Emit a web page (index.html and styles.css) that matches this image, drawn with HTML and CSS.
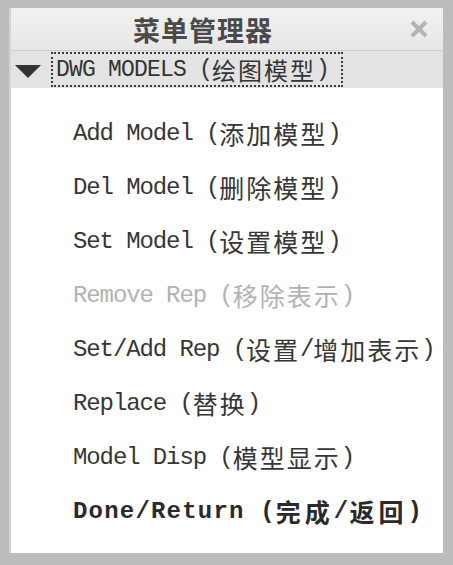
FILE: index.html
```html
<!DOCTYPE html>
<html lang="zh-CN">
<head>
    <meta charset="UTF-8">
    <meta name="viewport" content="width=device-width, initial-scale=1.0">
    <title>菜单管理器</title>
    <link rel="stylesheet" href="styles.css">
</head>
<body>
    <div class="window">
        <div class="titlebar">
            <div class="title">菜单管理器</div>
            <div class="close">
                <svg width="20" height="20" viewBox="0 0 20 20">
                    <path d="M3 3 L17 17 M17 3 L3 17" stroke="#b4b4b4" stroke-width="4" fill="none"/>
                </svg>
            </div>
        </div>

        <div class="section">
            <span class="arrow"></span>
            <div class="section-label">DWG MODELS (<span class="cjk">绘图模型</span>)</div>
        </div>

        <div class="menu">
            <div class="item">Add Model (<span class="cjk">添加模型</span>)</div>
            <div class="item">Del Model (<span class="cjk">删除模型</span>)</div>
            <div class="item">Set Model (<span class="cjk">设置模型</span>)</div>
            <div class="item disabled">Remove Rep (<span class="cjk">移除表示</span>)</div>
            <div class="item">Set/Add Rep (<span class="cjk">设置</span>/<span class="cjk">增加表示</span>)</div>
            <div class="item">Replace (<span class="cjk">替换</span>)</div>
            <div class="item">Model Disp (<span class="cjk">模型显示</span>)</div>
            <div class="item done">Done/Return (<span class="cjk">完成</span>/<span class="cjk">返回</span>)</div>
        </div>
    </div>
</body>
</html>
```

FILE: styles.css
```css
body {
    margin: 0;
    background-color: #bcbcbc;
    font-family: "Liberation Mono", "Noto Sans CJK SC", monospace;
    color: #363636;
}
.window {
    margin: 8px 10px 12px 9px;
    height: 545px;
    display: flex;
    flex-direction: column;
    border-left: 2px solid #d4d4d4;
    box-sizing: border-box;
}
.titlebar {
    height: 42px;
    display: flex;
    align-items: center;
    background: linear-gradient(#f1f1f1, #e7e7e7);
    border-bottom: 1px solid #cdcdcd;
}
.title {
    flex: 1;
    text-align: center;
    font-family: "Noto Sans CJK SC", sans-serif;
    font-weight: bold;
    font-size: 27px;
    letter-spacing: 1px;
    color: #4a4a4a;
}
.close {
    width: 48px;
    display: flex;
    justify-content: center;
}
.section {
    height: 37px;
    display: flex;
    align-items: center;
    background-color: #e3e3e3;
    padding-left: 4px;
}
.arrow {
    width: 0;
    height: 0;
    border-left: 13px solid transparent;
    border-right: 13px solid transparent;
    border-top: 13px solid #333;
    margin-top: 4px;
}
.section-label {
    margin-left: 10px;
    width: 292px;
    height: 35px;
    box-sizing: border-box;
    border: 2px dotted #3a3a3a;
    padding-left: 3px;
    display: flex;
    align-items: center;
    font-size: 23px;
    letter-spacing: -0.8px;
    white-space: pre;
    color: #333;
}
.section-label .cjk {
    font-size: 24px;
    letter-spacing: 2px;
}
.menu {
    flex: 1;
    background-color: #fff;
    padding-top: 18px;
    padding-left: 62px;
}
.item {
    height: 54px;
    display: flex;
    align-items: center;
    font-size: 24px;
    letter-spacing: -1.1px;
    white-space: pre;
}
.cjk {
    font-family: "Noto Sans CJK SC", sans-serif;
    font-size: 25px;
    letter-spacing: 2px;
}
.disabled {
    color: #b2b2b2;
}
.done {
    font-weight: bold;
    letter-spacing: 1.2px;
    color: #2a2a2a;
}
.done .cjk {
    letter-spacing: 4px;
}
```
